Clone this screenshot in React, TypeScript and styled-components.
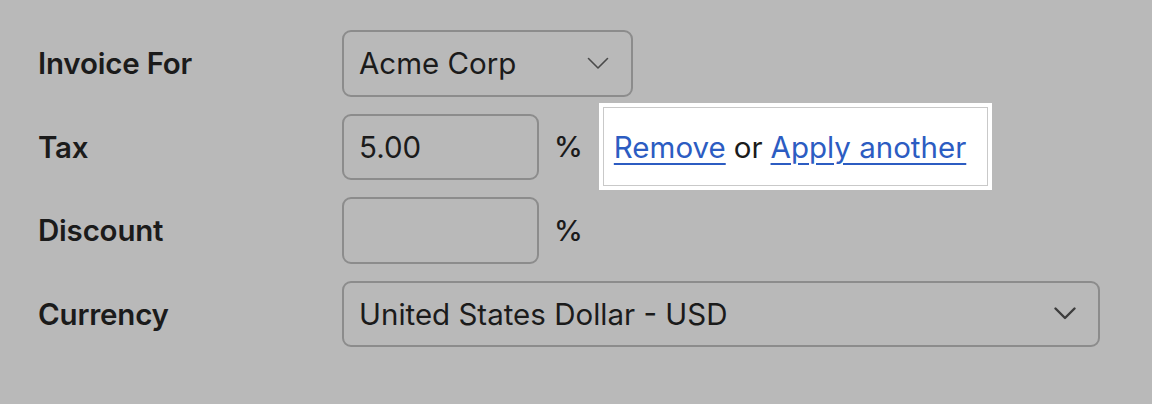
import styled, { createGlobalStyle } from "styled-components"

const GlobalStyle = createGlobalStyle`
  html, body {
    margin: 0;
    padding: 0;
    background: #b9b9b9;
  }
  body {
    font-family: Inter, "Noto Sans", sans-serif;
    color: #1b1b1b;
  }
`

const Form = styled.div`
  display: grid;
  grid-template-columns: 304px auto;
  grid-auto-rows: 66.5px;
  row-gap: 17px;
  align-items: center;
  padding: 30px 0 0 38px;
  width: 1152px;
  height: 404px;
  box-sizing: border-box;
`

const Label = styled.div`
  font-size: 29.5px;
  font-weight: 600;
  letter-spacing: -0.2px;
`

const Field = styled.div`
  display: flex;
  align-items: center;
  gap: 15px;
  height: 100%;
`

const Box = styled.div<{ width: number }>`
  box-sizing: border-box;
  width: ${(p) => p.width}px;
  height: 66.5px;
  border: 2px solid #8c8c8c;
  border-radius: 9px;
  display: flex;
  align-items: center;
  justify-content: space-between;
  padding: 0 22px 0 15px;
  font-size: 29.5px;
  font-weight: 400;
`

const Unit = styled.span`
  font-size: 29px;
  font-weight: 500;
`

const Highlight = styled.div`
  box-sizing: border-box;
  height: 87px;
  width: 393px;
  margin-left: 1px;
  background: #fff;
  border: 4px solid #fff;
  outline: 1px solid #c9c9c9;
  outline-offset: -5px;
  display: flex;
  align-items: center;
  gap: 8px;
  padding: 0 11px;
  font-size: 29.5px;
`

const LinkText = styled.a`
  color: #2c5cc2;
  text-decoration: underline;
  text-decoration-thickness: 2px;
  text-underline-offset: 5px;
  cursor: pointer;
`

const Chevron = ({ dark }: { dark?: boolean }) => (
  <svg width="22" height="13" viewBox="0 0 22 13" fill="none">
    <path
      d="M1.5 1.5 L11 11 L20.5 1.5"
      stroke={dark ? "#3d3d3d" : "#4a4a4a"}
      strokeWidth={dark ? 2.4 : 1.6}
      strokeLinecap="round"
      strokeLinejoin="round"
    />
  </svg>
)

export default function App() {
  return (
    <>
      <GlobalStyle />
      <Form>
        <Label>Invoice For</Label>
        <Field>
          <Box width={291}>
            <span>Acme Corp</span>
            <Chevron />
          </Box>
        </Field>

        <Label>Tax</Label>
        <Field>
          <Box width={197}>5.00</Box>
          <Unit>%</Unit>
          <Highlight>
            <LinkText>Remove</LinkText>
            <span>or</span>
            <LinkText>Apply another</LinkText>
          </Highlight>
        </Field>

        <Label>Discount</Label>
        <Field>
          <Box width={197} />
          <Unit>%</Unit>
        </Field>

        <Label>Currency</Label>
        <Field>
          <Box width={758}>
            <span>United States Dollar - USD</span>
            <Chevron dark />
          </Box>
        </Field>
      </Form>
    </>
  )
}
